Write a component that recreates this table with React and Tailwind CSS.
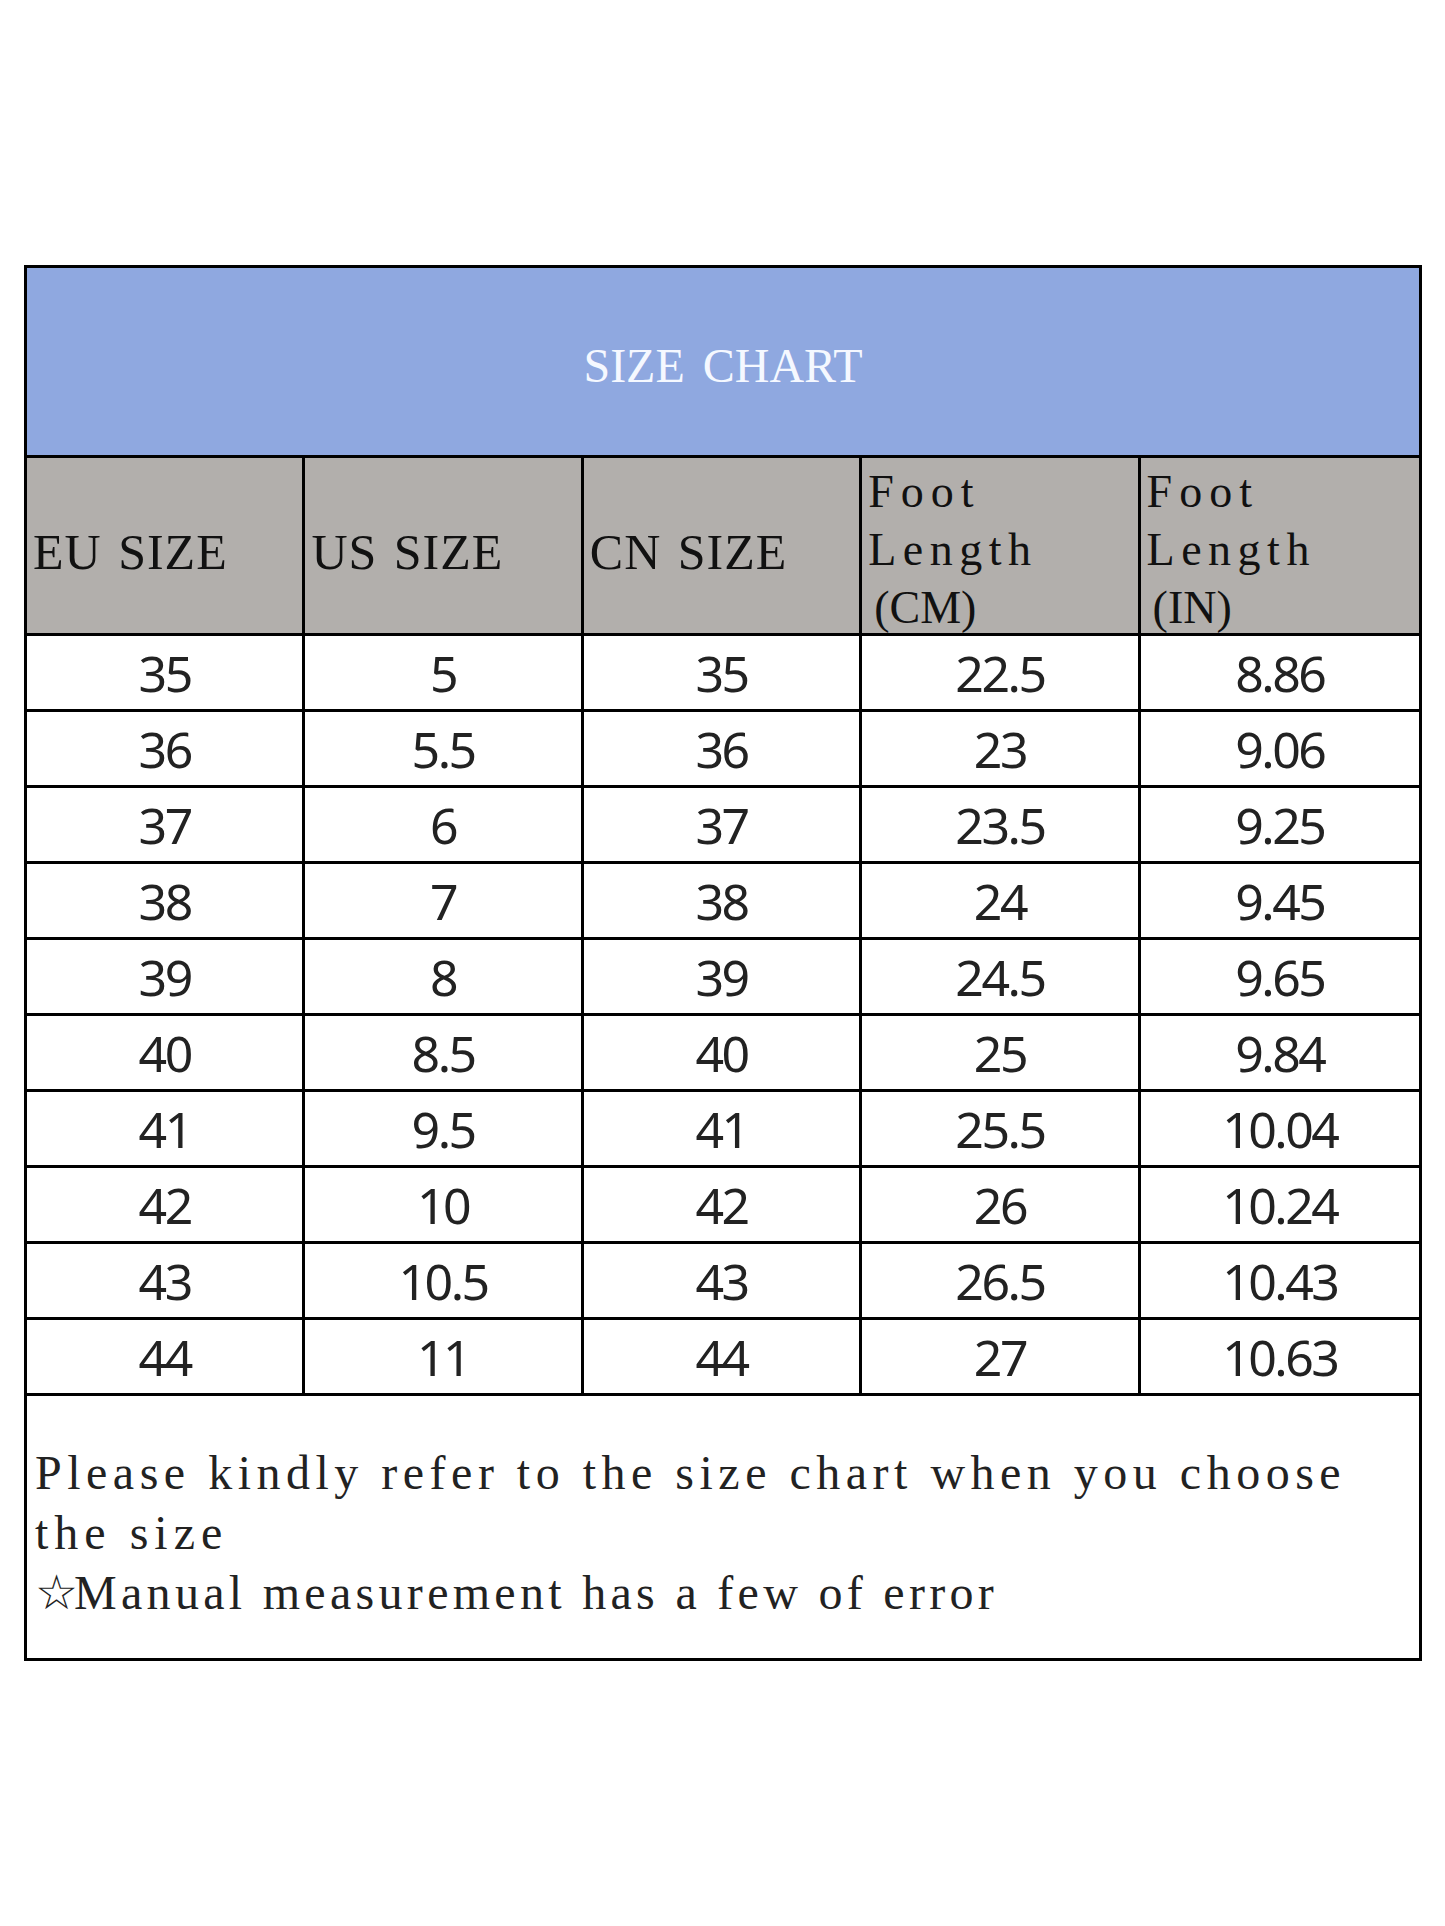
const ROWS = [
  ["35", "5", "35", "22.5", "8.86"],
  ["36", "5.5", "36", "23", "9.06"],
  ["37", "6", "37", "23.5", "9.25"],
  ["38", "7", "38", "24", "9.45"],
  ["39", "8", "39", "24.5", "9.65"],
  ["40", "8.5", "40", "25", "9.84"],
  ["41", "9.5", "41", "25.5", "10.04"],
  ["42", "10", "42", "26", "10.24"],
  ["43", "10.5", "43", "26.5", "10.43"],
  ["44", "11", "44", "27", "10.63"],
];

const serif = "font-['Liberation_Serif',serif]";

function HeadCell({ children }) {
  return (
    <div
      className={`flex items-center pl-[6px] pt-[10px] text-[50px] tracking-[1px] [word-spacing:3px] text-[#111] ${serif}`}
    >
      {children}
    </div>
  );
}

function LengthCell({ unit }) {
  return (
    <div
      className={`pl-[6px] pt-[5px] text-[46px] leading-[58px] text-[#111] ${serif}`}
    >
      <div className="tracking-[7px]">Foot</div>
      <div className="tracking-[6.5px]">Length</div>
      <div className="pl-[6px]">({unit})</div>
    </div>
  );
}

export default function App() {
  return (
    <div className="bg-white min-h-[1926px] pt-[265px] pl-[24px]">
      <div className="w-[1398px] border-[3px] border-black">
        <div className="h-[190px] bg-[#8fa8e0] border-b-[3px] border-black flex items-center justify-center pt-[8px]">
          <span className={`text-[48px] text-[#f5f8ff] [word-spacing:6px] ${serif}`}>
            SIZE CHART
          </span>
        </div>

        <div className="h-[178px] bg-[#b2afac] border-b-[3px] border-black grid grid-cols-5 divide-x-[3px] divide-black">
          <HeadCell>EU SIZE</HeadCell>
          <HeadCell>US SIZE</HeadCell>
          <HeadCell>CN SIZE</HeadCell>
          <LengthCell unit="CM" />
          <LengthCell unit="IN" />
        </div>

        {ROWS.map((row, i) => (
          <div
            key={i}
            className="h-[76px] border-b-[3px] border-black grid grid-cols-5 divide-x-[3px] divide-black"
          >
            {row.map((v, j) => (
              <div
                key={j}
                className="flex items-center justify-center text-[50px] tracking-[-2.5px] text-[#222] font-['Noto_Sans',sans-serif]"
              >
                {v}
              </div>
            ))}
          </div>
        ))}

        <div
          className={`h-[262px] pl-[8px] pt-[47px] text-[48px] leading-[60px] text-[#222] whitespace-nowrap ${serif}`}
        >
          <div className="tracking-[5.5px]">
            Please kindly refer to the size chart when you choose
          </div>
          <div className="tracking-[6px]">the size</div>
          <div className="tracking-[4.3px]">
            <span className="tracking-normal -mr-[4px]">☆</span>Manual
            measurement has a few of error
          </div>
        </div>
      </div>
    </div>
  );
}
